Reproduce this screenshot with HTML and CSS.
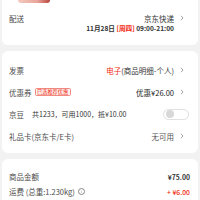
FILE: index.html
```html
<!DOCTYPE html>
<html lang="zh">
<head>
<meta charset="utf-8">
<link rel="stylesheet" href="styles.css">
</head>
<body>
<div class="page">
  <section class="card card-ship">
    <div class="thumb"></div>
    <div class="row row-ship">
      <span class="label">配送</span>
      <span class="right"><span class="val">京东快递</span><span class="arrow"><svg width="4" height="6" viewBox="0 0 4 6"><path d="M1 0.8 L3 3 L1 5.2" fill="none" stroke="#999" stroke-width="0.9"/></svg></span></span>
    </div>
    <div class="date">11月28日 <span class="red">[周四]</span> 09:00-21:00</div>
  </section>

  <section class="card card-list">
    <div class="row">
      <span class="label">发票</span>
      <span class="right"><span class="val"><span class="red">电子</span>(商品明细-个人)</span><span class="arrow"><svg width="4" height="6" viewBox="0 0 4 6"><path d="M1 0.8 L3 3 L1 5.2" fill="none" stroke="#999" stroke-width="0.9"/></svg></span></span>
    </div>
    <div class="row">
      <span class="label">优惠券 <span class="badge">已选推荐优惠</span></span>
      <span class="right"><span class="val strong">优惠¥26.00</span><span class="arrow"><svg width="4" height="6" viewBox="0 0 4 6"><path d="M1 0.8 L3 3 L1 5.2" fill="none" stroke="#999" stroke-width="0.9"/></svg></span></span>
    </div>
    <div class="row">
      <span class="label">京豆<span class="beans">共1233，可用1000，抵¥10.00</span></span>
      <span class="toggle"><span class="knob"></span></span>
    </div>
    <div class="row">
      <span class="label">礼品卡(京东卡/E卡)</span>
      <span class="right"><span class="val muted">无可用</span><span class="arrow"><svg width="4" height="6" viewBox="0 0 4 6"><path d="M1 0.8 L3 3 L1 5.2" fill="none" stroke="#999" stroke-width="0.9"/></svg></span></span>
    </div>
  </section>

  <section class="card card-sum">
    <div class="row row-sum">
      <span class="label">商品金额</span>
      <span class="amount">¥75.00</span>
    </div>
    <div class="row row-sum">
      <span class="label">运费 (总重:1.230kg) <span class="info">i</span></span>
      <span class="amount red">+ ¥6.00</span>
    </div>
  </section>
</div>
</body>
</html>
```

FILE: styles.css
```css
html, body {
  margin: 0;
  padding: 0;
  background: #f2f2f2;
  font-family: "Noto Sans CJK SC", "Noto Sans", sans-serif;
  color: #333;
}
.page {
  display: flex;
  flex-direction: column;
  gap: 6px;
  padding: 0 2px;
}
.card {
  background: #fff;
  border-radius: 6px;
  padding: 0 8px 0 7px;
}
.card-ship {
  border-radius: 0 0 6px 6px;
  padding-bottom: 12px;
}
.thumb {
  margin-left: 9px;
  width: 32px;
  height: 3px;
  border-radius: 0 0 3px 3px;
  background: linear-gradient(90deg, #f3c9c0 0%, #e9a69a 60%, #b9443d 100%);
  margin-bottom: 10px;
}
.row {
  display: flex;
  align-items: center;
  justify-content: space-between;
  height: 22px;
  font-size: 7.5px;
}
.row-ship {
  height: 10px;
}
.label {
  color: #4a4a4a;
  display: flex;
  align-items: center;
  white-space: nowrap;
}
.right {
  display: flex;
  align-items: center;
}
.val {
  color: #333;
}
.val.strong {
  color: #222;
}
.val.muted {
  color: #555;
}
.arrow {
  width: 16px;
  display: flex;
  justify-content: center;
}
.arrow svg {
  display: block;
}
.red {
  color: #f2270c;
}
.date {
  height: 10px;
  line-height: 10px;
  font-size: 6.6px;
  font-weight: 700;
  color: #333;
  text-align: right;
  padding-right: 16px;
}
.card-list {
  padding-top: 8px;
  padding-bottom: 6px;
}
.badge {
  margin-left: 3px;
  font-size: 5.2px;
  line-height: 6px;
  color: #f2270c;
  background: #fdeeee;
  border: 0.6px solid #f08a80;
  border-radius: 1.5px;
  padding: 0 1.5px;
}
.beans {
  margin-left: 8px;
  color: #333;
  font-size: 7px;
}
.toggle {
  width: 26px;
  height: 11px;
  border: 0.8px solid #e0e0e0;
  border-radius: 6px;
  background: #fff;
  display: flex;
  align-items: center;
  padding-left: 2px;
  box-sizing: border-box;
  margin-right: 1px;
}
.knob {
  width: 8px;
  height: 8px;
  border-radius: 50%;
  background: #d8d8d8;
}
.card-sum {
  padding-top: 10px;
  padding-bottom: 6px;
}
.row-sum {
  height: 15px;
}
.amount {
  font-size: 6.8px;
  font-weight: 700;
  color: #333;
}
.amount.red {
  color: #f2270c;
  font-weight: 500;
}
.info {
  margin-left: 3px;
  width: 5px;
  height: 5px;
  border: 0.6px solid #888;
  border-radius: 50%;
  font-size: 4px;
  line-height: 5px;
  text-align: center;
  color: #888;
  font-family: "DejaVu Sans", sans-serif;
  display: inline-block;
}
```
